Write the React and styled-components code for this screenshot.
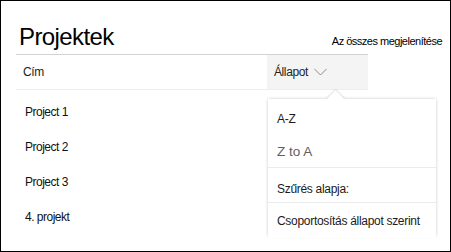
import React from "react";
import styled, { createGlobalStyle } from "styled-components";

const GlobalStyle = createGlobalStyle`
  html, body {
    margin: 0;
    padding: 0;
    background: #fff;
  }
  * {
    box-sizing: border-box;
  }
`;

const Frame = styled.div`
  position: relative;
  width: 451px;
  height: 252px;
  border: 1px solid #000;
  background: #fff;
  font-family: "Segoe UI", "Liberation Sans", Arial, sans-serif;
  color: #1b1b1b;
  overflow: hidden;
`;

const TopBar = styled.div`
  display: flex;
  justify-content: space-between;
  align-items: baseline;
  height: 53px;
  padding: 22px 8px 0 18px;
`;

const Title = styled.h1`
  margin: 0;
  font-size: 24px;
  font-weight: 400;
  line-height: 28px;
  letter-spacing: -0.6px;
  color: #000;
`;

const SeeAll = styled.a`
  font-size: 11px;
  letter-spacing: -0.5px;
  color: #000;
  text-decoration: none;
`;

const Table = styled.div`
  width: 352px;
  margin-left: 15px;
`;

const HeaderRow = styled.div`
  display: grid;
  grid-template-columns: 251px 1fr;
  height: 36px;
  border-top: 1px solid #d2d2d2;
  border-bottom: 1px solid #eeeeee;
`;

const HeaderCell = styled.div`
  display: flex;
  align-items: center;
  gap: 4px;
  padding-left: ${(p) => (p.$active ? "7px" : "7px")};
  background: ${(p) => (p.$active ? "#f4f4f4" : "transparent")};
  font-size: 12px;
  letter-spacing: -0.4px;
  color: #222;
`;

const Body = styled.div`
  padding-top: 4px;
`;

const Row = styled.div`
  display: flex;
  align-items: center;
  height: 35px;
  padding-left: 9px;
  font-size: 12px;
  letter-spacing: -0.5px;
  color: #111;
`;

const Menu = styled.div`
  position: absolute;
  left: 267px;
  top: 98px;
  width: 168px;
  height: 137px;
  background: #fff;
  box-shadow: 0 0 3px rgba(0, 0, 0, 0.22);
`;

const Beak = styled.div`
  position: absolute;
  left: 61px;
  top: -6px;
  width: 13px;
  height: 13px;
  background: #fff;
  transform: rotate(45deg);
  box-shadow: -1px -1px 2px rgba(0, 0, 0, 0.12);
`;

const Group = styled.div`
  position: relative;
  padding-top: ${(p) => p.$pad || 0}px;
  border-bottom: ${(p) => (p.$last ? "none" : "1px solid #ebebeb")};
  background: #fff;
`;

const Item = styled.div`
  display: flex;
  align-items: center;
  height: ${(p) => p.$h || 32}px;
  padding: 0 9px;
  padding-top: ${(p) => p.$top || 0}px;
  font-size: ${(p) => (p.$muted ? "13.5px" : "12px")};
  letter-spacing: ${(p) => (p.$muted ? "0" : "-0.3px")};
  color: ${(p) => (p.$muted ? "#5f5f5f" : "#1b1b1b")};
  white-space: nowrap;
`;

const Chevron = () => (
  <svg width="13" height="8" viewBox="0 0 13 8" style={{ marginLeft: 2 }}>
    <path d="M0.5 1 L6.5 7 L12.5 1" fill="none" stroke="#8a8a8a" strokeWidth="1" />
  </svg>
);

const projects = ["Project 1", "Project 2", "Project 3", "4. projekt"];

export default function App() {
  return (
    <>
      <GlobalStyle />
      <Frame>
        <TopBar>
          <Title>Projektek</Title>
          <SeeAll href="#">Az összes megjelenítése</SeeAll>
        </TopBar>
        <Table>
          <HeaderRow>
            <HeaderCell>Cím</HeaderCell>
            <HeaderCell $active>
              Állapot
              <Chevron />
            </HeaderCell>
          </HeaderRow>
          <Body>
            {projects.map((p) => (
              <Row key={p}>{p}</Row>
            ))}
          </Body>
        </Table>
        <Menu>
          <Beak />
          <Group $pad={4}>
            <Item>A-Z</Item>
            <Item $muted>Z to A</Item>
          </Group>
          <Group>
            <Item $h={34} $top={8}>Szűrés alapja:</Item>
          </Group>
          <Group $last>
            <Item $h={35}>Csoportosítás állapot szerint</Item>
          </Group>
        </Menu>
      </Frame>
    </>
  );
}
